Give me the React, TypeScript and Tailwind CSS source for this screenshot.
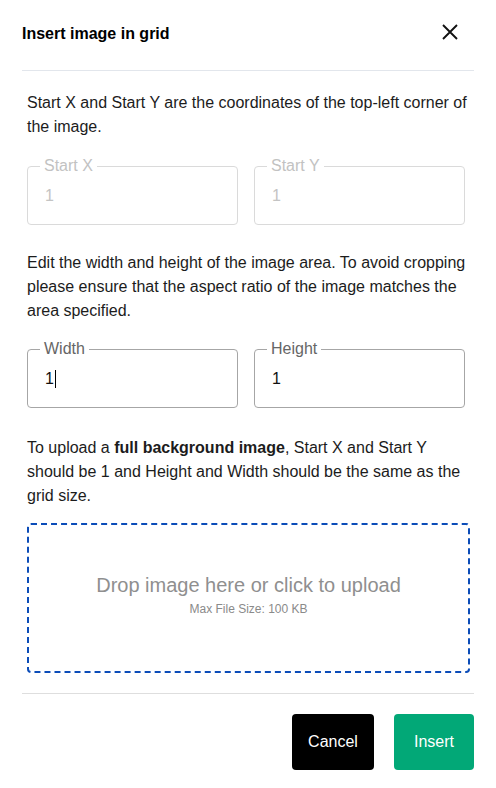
import React from 'react';

interface OutlinedFieldProps {
  label: string;
  value: string;
  disabled?: boolean;
  focused?: boolean;
}

const OutlinedField = ({ label, value, disabled, focused }: OutlinedFieldProps) => {
  return (
    <fieldset
      className={`w-[211px] h-[68px] rounded-[4px] border px-[12px] ${
        disabled ? 'border-[#dadada]' : 'border-[#a6a6a6]'
      }`}
    >
      <legend
        className={`px-[4px] text-[16px] leading-[18px] ${
          disabled ? 'text-[#c2c2c2]' : 'text-[#666666]'
        }`}
      >
        {label}
      </legend>
      <div
        className={`mt-[9px] pl-[5px] h-[24px] flex items-center text-[16px] leading-[24px] ${
          disabled ? 'text-[#c4c4c4]' : 'text-[#111111]'
        }`}
      >
        {value}
        {focused && <span className="inline-block w-px h-[18px] bg-black ml-px" />}
      </div>
    </fieldset>
  );
};

export default function App() {
  return (
    <div
      className="w-[496px] h-[788px] bg-white px-[22px] text-[#1c1c1c]"
      style={{ fontFamily: '"Liberation Sans", Arial, sans-serif' }}
    >
      {/* header */}
      <div className="h-[71px] pb-[3px] flex items-center justify-between border-b border-[#e2e6ec]">
        <h2 className="text-[16px] font-bold text-black">Insert image in grid</h2>
        <button className="mr-[16px] mb-[3px] p-0" aria-label="Close">
          <svg width="16" height="16" viewBox="0 0 16 16" className="block">
            <path d="M1 1 L15 15 M15 1 L1 15" stroke="#111" strokeWidth="1.9" strokeLinecap="butt" />
          </svg>
        </button>
      </div>

      <div className="pl-[5px] pr-[4px]">
        <p className="mt-[20px] text-[16px] leading-[24px]">
          Start X and Start Y are the coordinates of the top-left corner of the image.
        </p>

        <div className="mt-[18px] flex gap-[16px]">
          <OutlinedField label="Start X" value="1" disabled />
          <OutlinedField label="Start Y" value="1" disabled />
        </div>

        <p className="mt-[26px] text-[16px] leading-[24px]">
          Edit the width and height of the image area. To avoid cropping please ensure that the aspect
          ratio of the image matches the area specified.
        </p>

        <div className="mt-[17px] flex gap-[16px]">
          <OutlinedField label="Width" value="1" focused />
          <OutlinedField label="Height" value="1" />
        </div>

        <p className="mt-[28px] text-[16px] leading-[24px]">
          To upload a <span className="font-bold">full background image</span>, Start X and Start Y
          should be 1 and Height and Width should be the same as the grid size.
        </p>

        {/* drop zone */}
        <div className="mt-[15px] h-[150px] pb-[8px] rounded-[4px] border-2 border-dashed border-[#0b4cb8] flex flex-col items-center justify-center cursor-pointer">
          <p className="text-[20px] leading-[24px] text-[#8f8f8f]">Drop image here or click to upload</p>
          <p className="mt-[5px] text-[12px] leading-[14px] text-[#8a8a8a]">Max File Size: 100 KB</p>
        </div>
      </div>

      <div className="mt-[20px] border-t border-[#dedede]" />

      <div className="mt-[20px] flex justify-end gap-[20px]">
        <button className="w-[82px] h-[56px] rounded-[4px] bg-black text-white text-[16px]">Cancel</button>
        <button className="w-[80px] h-[56px] rounded-[4px] bg-[#02a877] text-white text-[16px]">Insert</button>
      </div>
    </div>
  );
}
